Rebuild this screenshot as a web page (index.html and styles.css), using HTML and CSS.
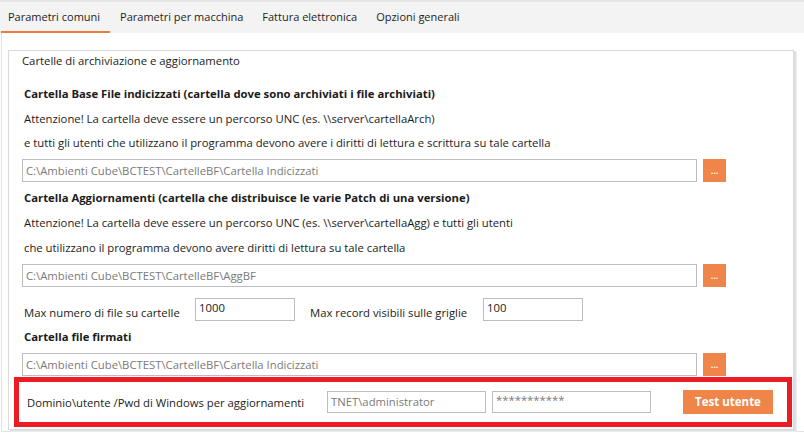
FILE: index.html
```html
<!DOCTYPE html>
<html lang="it">
<head>
<meta charset="utf-8">
<title>Parametri comuni</title>
<link rel="stylesheet" href="styles.css">
</head>
<body>
<div class="tabs">
  <div class="tab active">Parametri comuni</div>
  <div class="tab">Parametri per macchina</div>
  <div class="tab">Fattura elettronica</div>
  <div class="tab">Opzioni generali</div>
</div>
<div class="page">
  <div class="group">
    <div class="group-title">Cartelle di archiviazione e aggiornamento</div>

    <div class="heading h1">Cartella Base File indicizzati (cartella dove sono archiviati i file archiviati)</div>
    <div class="text t1">Attenzione! La cartella deve essere un percorso UNC (es. \\server\cartellaArch)</div>
    <div class="text t2">e tutti gli utenti che utilizzano il programma devono avere i diritti di lettura e scrittura su tale cartella</div>
    <div class="path-row r1">
      <div class="field path">C:\Ambienti Cube\BCTEST\CartelleBF\Cartella Indicizzati</div>
      <div class="browse">...</div>
    </div>

    <div class="heading h2">Cartella Aggiornamenti (cartella che distribuisce le varie Patch di una versione)</div>
    <div class="text t3">Attenzione! La cartella deve essere un percorso UNC (es. \\server\cartellaAgg) e tutti gli utenti</div>
    <div class="text t4">che utilizzano il programma devono avere diritti di lettura su tale cartella</div>
    <div class="path-row r2">
      <div class="field path">C:\Ambienti Cube\BCTEST\CartelleBF\AggBF</div>
      <div class="browse">...</div>
    </div>

    <div class="max-row">
      <div class="max-label first">Max numero di file su cartelle</div>
      <div class="field num">1000</div>
      <div class="max-label second">Max record visibili sulle griglie</div>
      <div class="field num">100</div>
    </div>

    <div class="heading h3">Cartella file firmati</div>
    <div class="path-row r3">
      <div class="field path">C:\Ambienti Cube\BCTEST\CartelleBF\Cartella Indicizzati</div>
      <div class="browse">...</div>
    </div>

    <div class="cred">
      <div class="cred-label">Dominio\utente /Pwd di Windows per aggiornamenti</div>
      <div class="field user">TNET\administrator</div>
      <div class="field pwd">***********</div>
      <div class="test-btn">Test utente</div>
    </div>
  </div>
</div>
</body>
</html>
```

FILE: styles.css
```css
* { box-sizing: border-box; }
html, body { margin: 0; padding: 0; background: #fff; }
body {
  width: 804px;
  height: 434px;
  overflow: hidden;
  font-family: "Open Sans", "Noto Sans", sans-serif;
  font-size: 11.3px;
  color: #1b1b1b;
}

.tabs {
  display: flex;
  height: 33px;
  background: #f3f3f3;
  border-top: 2px solid #e6e6e6;
  padding-left: 1px;
}
.tab {
  padding: 0 9px 0 9px;
  line-height: 29px;
  font-size: 11px;
  color: #1e1e1e;
  margin-right: 1px;
}
.tab.active {
  border-bottom: 2px solid #ee7d3b;
  padding-left: 7px;
  padding-right: 10px;
}

.page {
  height: 399px;
  border-left: 1px solid #e2e2e2;
  border-bottom: 1px solid #e2e2e2;
  margin-left: 1px;
  padding: 17px 0 0 6px;
}

.group {
  width: 786px;
  height: 380px;
  border: 1px solid #dadada;
  box-shadow: 2px 1px 0 #e0e0e0, 3px 2px 0 #ededed;
  padding-left: 13px;
  display: flex;
  flex-direction: column;
}

.group-title {
  line-height: 20px;
}

.heading, .text { line-height: 20px; padding-left: 2px; white-space: nowrap; }
.heading { font-weight: bold; }

.h1 { margin-top: 13px; }
.t1 { margin-top: 5px; }
.t2 { margin-top: 4px; }
.r1 { margin-top: 6px; }
.h2 { margin-top: 6px; }
.t3 { margin-top: 5px; }
.t4 { margin-top: 5px; }
.r2 { margin-top: 6px; }
.h3 { margin-top: 6px; }
.r3 { margin-top: 6px; }

.path-row {
  display: flex;
  gap: 6px;
  height: 23px;
}
.field {
  border: 1px solid #bdbdbd;
  color: #7a7a7a;
  background: #fff;
  padding-left: 3px;
  white-space: nowrap;
  overflow: hidden;
}
.path {
  width: 675px;
  height: 23px;
  line-height: 21px;
}
.browse {
  width: 23px;
  height: 23px;
  background: #ef8549;
  color: #fff;
  font-weight: bold;
  font-size: 9px;
  text-align: center;
  line-height: 24px;
}

.max-row {
  display: flex;
  align-items: flex-start;
  margin-top: 11px;
  height: 23px;
}
.max-label { line-height: 20px; margin-top: 5px; padding-left: 2px; white-space: nowrap; }
.max-label.first { width: 173px; }
.max-label.second { width: 173px; margin-left: 15px; padding-left: 0; }
.num {
  width: 100px;
  height: 23px;
  line-height: 18px;
  color: #1b1b1b;
}

.cred {
  display: flex;
  align-items: center;
  margin: 1px 0 0 -8px;
  width: 778px;
  height: 50px;
  border: 5px solid #ed1c24;
  padding-left: 8px;
}
.cred-label { width: 300px; line-height: 20px; margin-top: 2px; white-space: nowrap; }
.user {
  width: 159px;
  height: 22px;
  line-height: 20px;
}
.pwd {
  width: 159px;
  height: 22px;
  line-height: 16px;
  margin-left: 6px;
}
.test-btn {
  width: 90px;
  height: 24px;
  margin-left: 32px;
  background: #ef8549;
  color: #fff;
  font-weight: bold;
  font-size: 11.5px;
  text-align: center;
  line-height: 24px;
}
```
